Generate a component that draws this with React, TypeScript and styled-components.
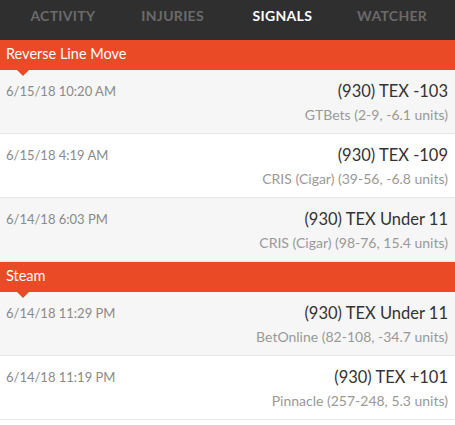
import styled, { createGlobalStyle } from 'styled-components';

const GlobalStyle = createGlobalStyle`
  body {
    margin: 0;
    background: #ffffff;
    font-family: Lato, "Open Sans", sans-serif;
  }
`;

const Page = styled.div`
  width: 455px;
  height: 425px;
  overflow: hidden;
  background: #ffffff;
`;

const TabBar = styled.nav`
  height: 40px;
  background-color: #302f30;
  display: flex;
  padding: 0 8px;
  box-sizing: border-box;
`;

const Tab = styled.div<{ $active?: boolean }>`
  width: 110px;
  text-align: center;
  padding-top: 7px;
  font-size: 14px;
  font-weight: 700;
  letter-spacing: 0.3px;
  color: ${(p) => (p.$active ? '#ffffff' : '#6a6a6a')};
`;

const SectionHeader = styled.div`
  position: relative;
  height: 30px;
  background-color: #eb4a27;
  color: #ffffff;
  font-size: 14.5px;
  line-height: 28px;
  padding-left: 6px;

  &::after {
    content: '';
    position: absolute;
    left: 17px;
    bottom: -6px;
    border-left: 6px solid transparent;
    border-right: 6px solid transparent;
    border-top: 6px solid #eb4a27;
  }
`;

const Row = styled.div<{ $shaded?: boolean }>`
  height: 64px;
  box-sizing: border-box;
  border-bottom: 1px solid #e6e6e6;
  background-color: ${(p) => (p.$shaded ? '#f6f6f6' : '#ffffff')};
  display: flex;
  justify-content: space-between;
  padding: 11px 7px 0 6px;
`;

const Stamp = styled.div`
  font-size: 13px;
  color: #8a8a8a;
  padding-top: 2px;
`;

const Pick = styled.div`
  text-align: right;
`;

const Line = styled.div`
  font-size: 16.5px;
  color: #333333;
  line-height: 20px;
`;

const Book = styled.div`
  font-size: 14px;
  color: #999999;
  margin-top: 5px;
`;

type Signal = {
  time: string;
  line: string;
  book: string;
  shaded?: boolean;
};

const sections: { title: string; items: Signal[] }[] = [
  {
    title: 'Reverse Line Move',
    items: [
      { time: '6/15/18 10:20 AM', line: '(930) TEX -103', book: 'GTBets (2-9, -6.1 units)', shaded: true },
      { time: '6/15/18 4:19 AM', line: '(930) TEX -109', book: 'CRIS (Cigar) (39-56, -6.8 units)' },
      { time: '6/14/18 6:03 PM', line: '(930) TEX Under 11', book: 'CRIS (Cigar) (98-76, 15.4 units)', shaded: true },
    ],
  },
  {
    title: 'Steam',
    items: [
      { time: '6/14/18 11:29 PM', line: '(930) TEX Under 11', book: 'BetOnline (82-108, -34.7 units)', shaded: true },
      { time: '6/14/18 11:19 PM', line: '(930) TEX +101', book: 'Pinnacle (257-248, 5.3 units)' },
    ],
  },
];

const tabs = ['Activity', 'Injuries', 'Signals', 'Watcher'];

const App: React.FC = () => {
  return (
    <Page>
      <GlobalStyle />
      <TabBar>
        {tabs.map((t) => (
          <Tab key={t} $active={t === 'Signals'}>
            {t.toUpperCase()}
          </Tab>
        ))}
      </TabBar>
      {sections.map((s) => (
        <div key={s.title}>
          <SectionHeader>{s.title}</SectionHeader>
          {s.items.map((i) => (
            <Row key={i.time} $shaded={i.shaded}>
              <Stamp>{i.time}</Stamp>
              <Pick>
                <Line>{i.line}</Line>
                <Book>{i.book}</Book>
              </Pick>
            </Row>
          ))}
        </div>
      ))}
    </Page>
  );
};

export default App;
